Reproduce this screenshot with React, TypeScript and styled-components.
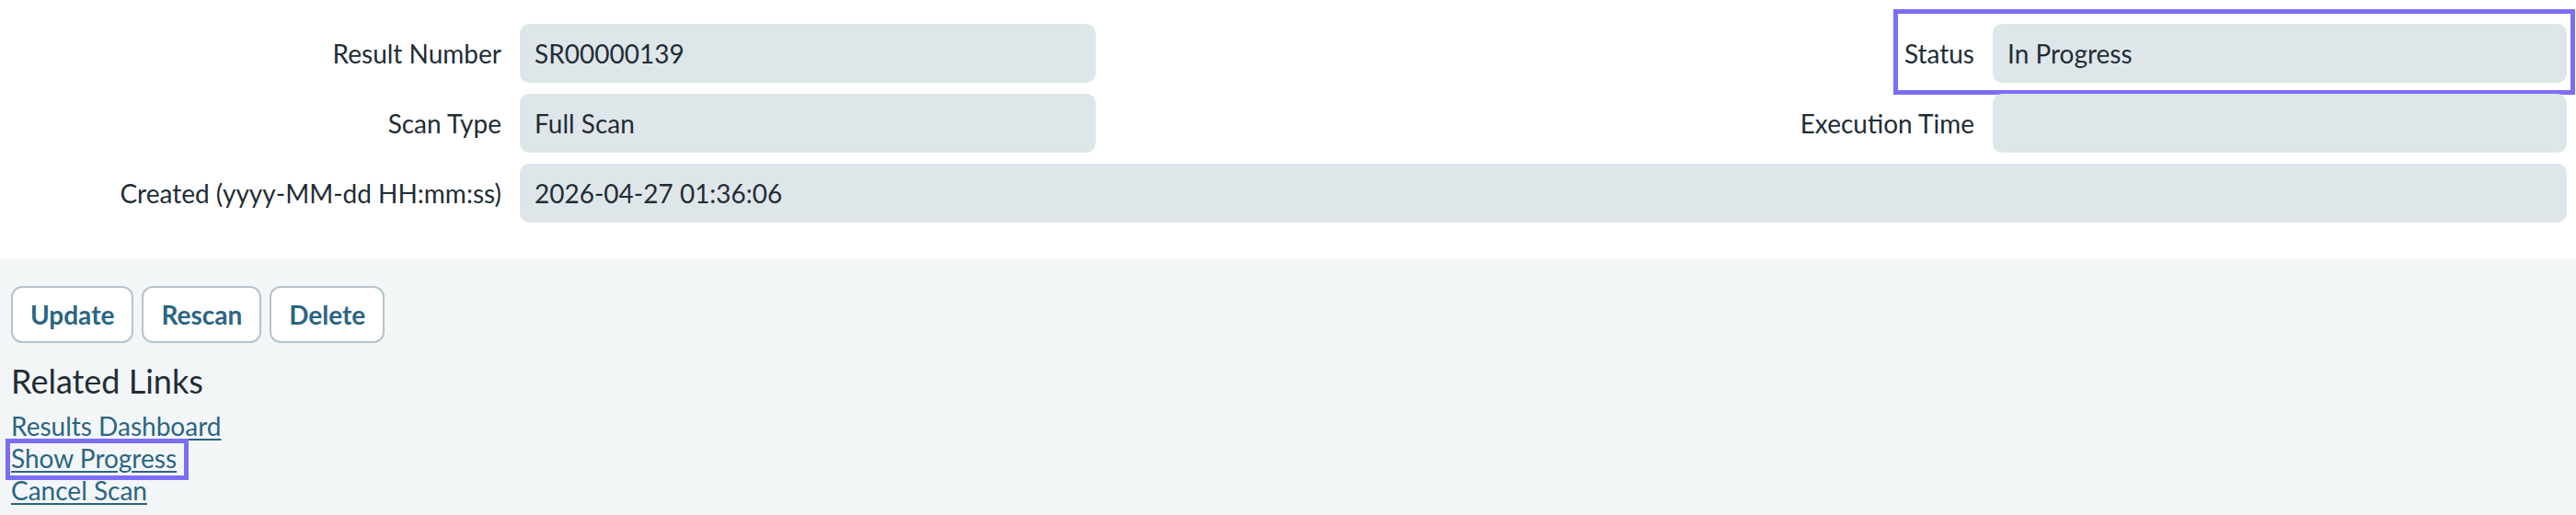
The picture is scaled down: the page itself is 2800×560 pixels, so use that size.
import { createGlobalStyle, styled } from 'styled-components';

const GlobalStyle = createGlobalStyle`
  html, body {
    margin: 0;
    padding: 0;
    background: #ffffff;
    font-family: Lato, "Open Sans", sans-serif;
    color: #1f2d36;
  }
`;

const Page = styled.div`
  width: 2800px;
  min-height: 560px;
  display: flex;
  flex-direction: column;
`;

const DetailsGrid = styled.div`
  display: grid;
  grid-template-columns: 545px 626px 1fr 624px;
  grid-auto-rows: 64px;
  column-gap: 20px;
  row-gap: 12px;
  padding: 26px 10px 40px 0;
`;

const Label = styled.div`
  display: flex;
  align-items: center;
  justify-content: flex-end;
  font-size: 28px;
  white-space: nowrap;
`;

const Value = styled.div<{ $span?: number; $mark?: boolean }>`
  position: relative;
  grid-column: span ${(p) => p.$span ?? 1};
  display: flex;
  align-items: center;
  padding: 0 16px;
  background: #dfe6e9;
  border-radius: 10px;
  font-size: 28px;
  color: #1f2d36;

  ${(p) =>
    p.$mark &&
    `
    &::after {
      content: '';
      position: absolute;
      left: -108px;
      right: -9px;
      top: -16px;
      bottom: -13px;
      border: 5px solid #7b6ef6;
      pointer-events: none;
    }
  `}
`;

const ActionArea = styled.div`
  flex: 1;
  background: #f3f6f7;
  padding: 29px 12px 10px;
`;

const ButtonRow = styled.div`
  display: flex;
  gap: 9px;
`;

const Button = styled.button`
  height: 62px;
  padding: 0 19px;
  background: #ffffff;
  border: 2px solid #b4c4cb;
  border-radius: 12px;
  font-family: Lato, sans-serif;
  font-size: 28px;
  font-weight: 700;
  color: #2b6583;
  cursor: pointer;
`;

const Heading = styled.h2`
  margin: 20px 0 10px;
  font-size: 36px;
  font-weight: 400;
  line-height: 1.2;
  color: #1f2d36;
`;

const LinkList = styled.div`
  display: flex;
  flex-direction: column;
  align-items: flex-start;
`;

const LinkItem = styled.a<{ $mark?: boolean }>`
  position: relative;
  font-size: 28px;
  line-height: 35px;
  color: #2b6583;
  text-decoration: underline;
  text-underline-offset: 3px;

  ${(p) =>
    p.$mark &&
    `
    &::after {
      content: '';
      position: absolute;
      left: -6px;
      right: -13px;
      top: -4px;
      bottom: -6px;
      border: 5px solid #7b6ef6;
      pointer-events: none;
    }
  `}
`;

export default function App() {
  return (
    <>
      <GlobalStyle />
      <Page>
        <DetailsGrid>
          <Label>Result Number</Label>
          <Value>SR00000139</Value>
          <Label>Status</Label>
          <Value $mark>In Progress</Value>

          <Label>Scan Type</Label>
          <Value>Full Scan</Value>
          <Label>Execution Time</Label>
          <Value />

          <Label>Created (yyyy-MM-dd HH:mm:ss)</Label>
          <Value $span={3}>2026-04-27 01:36:06</Value>
        </DetailsGrid>

        <ActionArea>
          <ButtonRow>
            <Button>Update</Button>
            <Button>Rescan</Button>
            <Button>Delete</Button>
          </ButtonRow>
          <Heading>Related Links</Heading>
          <LinkList>
            <LinkItem href="#">Results Dashboard</LinkItem>
            <LinkItem href="#" $mark>
              Show Progress
            </LinkItem>
            <LinkItem href="#">Cancel Scan</LinkItem>
          </LinkList>
        </ActionArea>
      </Page>
    </>
  );
}
